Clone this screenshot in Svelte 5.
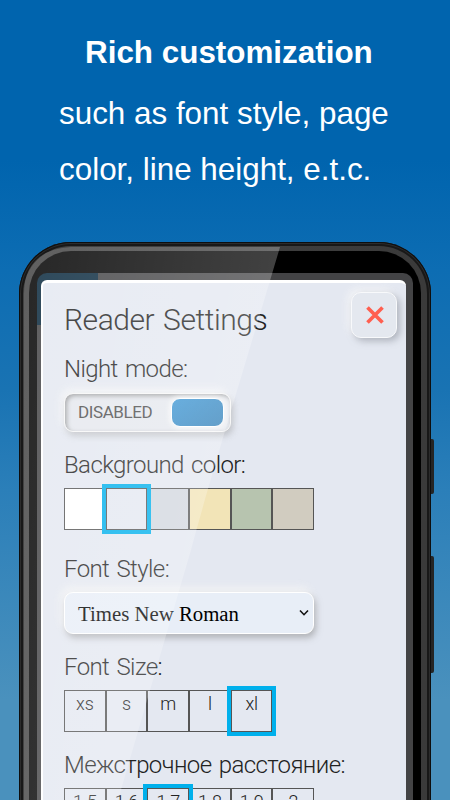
<script lang="ts">
	const colors = ['#ffffff', '#e4e8f1', '#d2d7df', '#f2e4b7', '#b7c4af', '#d1ccc0'];
	const sizes = ['xs', 's', 'm', 'l', 'xl'];
	const heights = ['1.5', '1.6', '1.7', '1.8', '1.9', '2'];

	let color = $state('#e4e8f1');
	let size = $state('xl');
	let lineHeight = $state('1.7');
	let night = $state(false);
</script>

<div class="promo">
	<header>
		<h1>Rich customization</h1>
		<p>such as font style, page<br />color, line height, e.t.c.</p>
	</header>

	<div class="phone">
		<span class="side-key power"></span>
		<span class="side-key volume"></span>
		<div class="rim">
			<div class="bezel">
				<div class="screen">
					<section class="modal">
						<button class="close" aria-label="Close">
							<svg width="20" height="20" viewBox="0 0 20 20">
								<path d="M2.5 2.5L17.5 17.5M17.5 2.5L2.5 17.5" stroke="#ff5f4f" stroke-width="3.7" />
							</svg>
						</button>

						<h2>Reader Settings</h2>

						<div class="label">Night mode:</div>
						<button class="toggle" onclick={() => (night = !night)}>
							<span class="state">{night ? 'ENABLED' : 'DISABLED'}</span>
							<span class="knob"></span>
						</button>

						<div class="label color-label">Background color:</div>
						<div class="cells">
							{#each colors as c}
								<button
									class="cell"
									class:selected={c === color}
									style="background: {c}"
									aria-label={c}
									onclick={() => (color = c)}
								></button>
							{/each}
						</div>

						<div class="label style-label">Font Style:</div>
						<div class="select">
							<span>Times New Roman</span>
							<svg width="10" height="8" viewBox="0 0 10 8" fill="none">
								<path d="M1 1.5L5 5.7L9 1.5" stroke="#111" stroke-width="1.6" />
							</svg>
						</div>

						<div class="label size-label">Font Size:</div>
						<div class="cells">
							{#each sizes as s}
								<button class="cell" class:selected={s === size} onclick={() => (size = s)}>{s}</button>
							{/each}
						</div>

						<div class="label height-label">Межстрочное расстояние:</div>
						<div class="cells">
							{#each heights as h}
								<button
									class="cell"
									class:selected={h === lineHeight}
									onclick={() => (lineHeight = h)}>{h}</button
								>
							{/each}
						</div>
					</section>
				</div>
			</div>
		</div>
		<div class="glare"></div>
	</div>
</div>

<style>
	:global(body) {
		margin: 0;
	}
	.promo {
		width: 450px;
		height: 800px;
		overflow: hidden;
		display: flex;
		flex-direction: column;
		align-items: center;
		background: linear-gradient(#0064ae 0, #0064ae 160px, #0d6db3 270px, #1973b3 390px, #2b7fb9 490px, #4a91bd 700px, #4a91bd 100%);
	}
	header {
		box-sizing: border-box;
		width: 100%;
		height: 242px;
		flex-shrink: 0;
		padding: 35px 0 0 59px;
		color: #fff;
		font-family: 'Liberation Sans', Arial, sans-serif;
	}
	h1 {
		margin: 0 0 0 26px;
		font-size: 31.4px;
		line-height: 36px;
		white-space: nowrap;
	}
	p {
		margin: 15px 0 0;
		font-size: 31.4px;
		line-height: 55.5px;
		white-space: nowrap;
	}
	.phone {
		position: relative;
		box-sizing: border-box;
		width: 412px;
		height: 640px;
		flex-shrink: 0;
		padding: 4px 4px 0;
		background: #181818;
		border-radius: 52px 52px 0 0;
		box-shadow: inset 0 0 0 1px #0e0e0e, inset 0 0 0 2px #2c2c2c;
	}
	.side-key {
		position: absolute;
		left: 412px;
		width: 3px;
		background: #252525;
		border-radius: 0 2px 2px 0;
	}
	.power {
		top: 197px;
		height: 55px;
	}
	.volume {
		top: 314px;
		height: 117px;
	}
	.rim {
		box-sizing: border-box;
		height: 100%;
		padding: 5px 6px 0;
		background: linear-gradient(90deg, #434343, #3a3a3a);
		border-radius: 48px 48px 0 0;
	}
	.bezel {
		box-sizing: border-box;
		height: 100%;
		padding: 22px 8px 0;
		background: #000;
		border-radius: 42px 42px 0 0;
	}
	.screen {
		box-sizing: border-box;
		height: 100%;
		padding: 7px 7px 0 4px;
		background: linear-gradient(#08283d, #08283d) 0 0 / 61px 52px no-repeat, #434345;
		border-radius: 10px 10px 0 0;
	}
	.modal {
		position: relative;
		box-sizing: border-box;
		height: 100%;
		padding: 22px 0 0 21px;
		border: solid #fff;
		border-width: 3px 0 0 2px;
		border-radius: 6px 6px 0 0;
		background: #e4e8f1;
		color: #222;
		font-family: Roboto, sans-serif;
		font-weight: 300;
	}
	button {
		padding: 0;
		border: 0;
		font: inherit;
		color: inherit;
	}
	.close {
		position: absolute;
		top: 9px;
		right: 9px;
		width: 46px;
		height: 46px;
		padding-left: 1px;
		display: flex;
		align-items: center;
		justify-content: center;
		border: 1px solid #f8f9fb;
		border-radius: 10px;
		background: #e4e8ef;
		box-shadow: 3px 3px 7px rgba(130, 135, 145, 0.55), -3px -3px 8px rgba(250, 250, 250, 0.8);
	}
	h2 {
		margin: 0;
		font-size: 30px;
		font-weight: 300;
		line-height: 30px;
		letter-spacing: -0.45px;
		word-spacing: 2px;
		white-space: nowrap;
	}
	.label {
		margin-top: 20px;
		font-size: 24px;
		line-height: 28px;
		letter-spacing: -0.6px;
		word-spacing: 2px;
		white-space: nowrap;
	}
	.toggle {
		box-sizing: border-box;
		width: 167px;
		height: 39px;
		margin-top: 10px;
		padding: 0 6px 1px 13px;
		display: flex;
		align-items: center;
		justify-content: space-between;
		border: 1px solid #f7f7f7;
		border-radius: 9px;
		background: #e5e8ee;
		box-shadow: inset 2px 2px 4px rgba(120, 120, 120, 0.65), 2px 4px 6px rgba(140, 140, 140, 0.4), -3px -4px 9px rgba(247, 247, 247, 0.8);
	}
	.state {
		font-size: 17px;
		font-weight: 400;
		letter-spacing: -0.4px;
		color: #4c4c4c;
	}
	.knob {
		box-sizing: border-box;
		width: 53px;
		height: 29px;
		border: 1px solid #fff;
		border-radius: 9px;
		background: linear-gradient(145deg, #3d97d5, #3280b8);
		box-shadow: 0 0 5px 2px rgba(250, 250, 250, 0.8);
	}
	.color-label {
		margin-top: 19px;
	}
	.cells {
		display: flex;
		margin-top: 9px;
	}
	.cell {
		box-sizing: border-box;
		width: 41.7px;
		height: 42px;
		padding-bottom: 14px;
		border: 1px solid #555;
		background: transparent;
		font-size: 18px;
		line-height: 26px;
		letter-spacing: -0.2px;
	}
	.cell.selected {
		position: relative;
		outline: 4px solid #00b0ec;
	}
	.style-label {
		margin-top: 25px;
	}
	.select {
		box-sizing: border-box;
		width: 250px;
		height: 42px;
		margin-top: 9px;
		padding: 0 4px 0 13px;
		display: flex;
		align-items: center;
		justify-content: space-between;
		border: 1px solid #fff;
		border-radius: 9px;
		background: #e8eef7;
		box-shadow: 2px 4px 6px rgba(130, 130, 130, 0.5), -3px -5px 9px rgba(245, 245, 245, 0.8);
		font-family: 'Liberation Serif', 'Times New Roman', serif;
		font-size: 20.8px;
		font-weight: 400;
		color: #000;
	}
	.select span {
		padding-top: 2px;
	}
	.size-label {
		margin-top: 19px;
	}
	.height-label {
		margin-top: 19px;
	}
	.glare {
		position: absolute;
		inset: 0;
		pointer-events: none;
		border-radius: 52px 52px 0 0;
		background: linear-gradient(100deg, rgba(255, 255, 255, 0.15), rgba(255, 255, 255, 0.28) 60%);
		clip-path: path('M5 558V52Q5 8 52 5H261C230 110 190 240 172 308Q145 400 99 558Z');
	}
</style>
